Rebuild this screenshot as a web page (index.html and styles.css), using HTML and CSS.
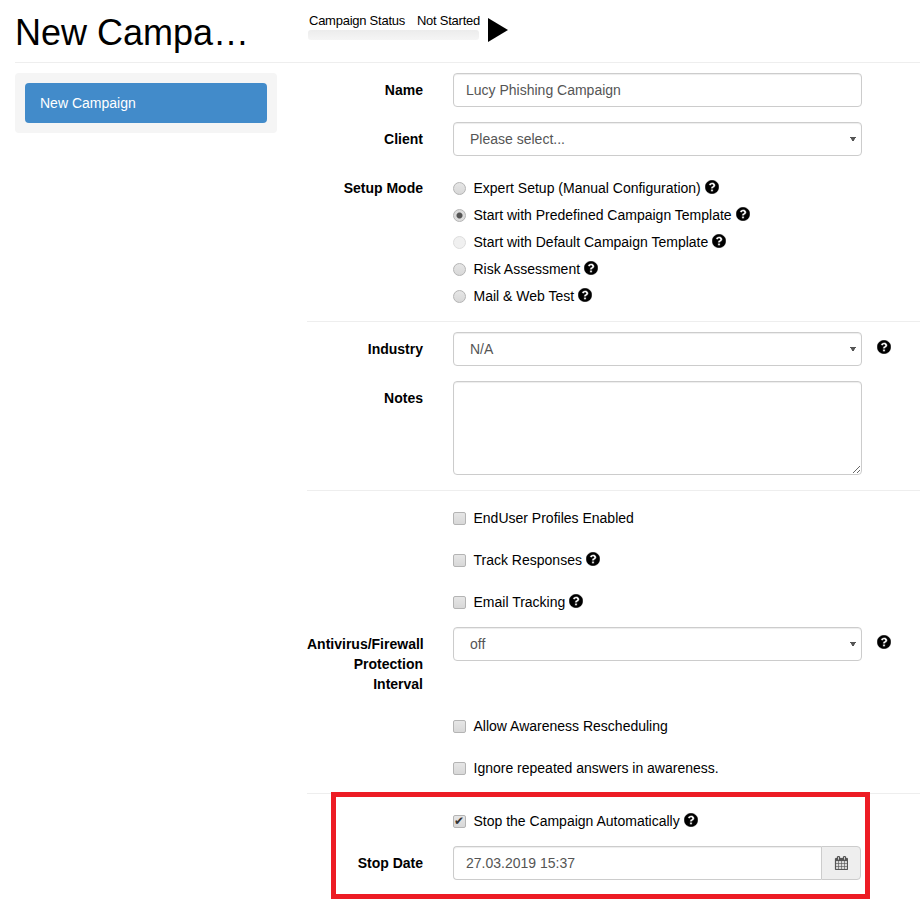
FILE: index.html
```html
<!DOCTYPE html>
<html lang="en">
<head>
    <meta charset="UTF-8">
    <title>New Campaign</title>
    <link rel="stylesheet" href="styles.css">
</head>
<body>
    <svg class="icon-defs" width="0" height="0">
        <symbol id="help" viewBox="100 100 1592 1592">
            <path d="M1024 1376v-192q0-14-9-23t-23-9h-192q-14 0-23 9t-9 23v192q0 14 9 23t23 9h192q14 0 23-9t9-23zm256-672q0-88-55.5-163t-138.5-116-170-41q-243 0-371 213-15 24 8 42l132 100q7 6 19 6 16 0 25-12 53-68 86-92 34-24 86-24 48 0 85.5 26t37.5 59q0 38-20 61t-68 45q-63 28-115.5 86.5t-52.5 125.5v36q0 14 9 23t23 9h192q14 0 23-9t9-23q0-19 21.5-49.5t54.5-49.5q32-18 49-28.5t46-35 44.5-48 28-60.5 12.5-81zm384 192q0 209-103 385.5t-279.5 279.5-385.5 103-385.5-103-279.5-279.5-103-385.5 103-385.5 279.5-279.5 385.5-103 385.5 103 279.5 279.5 103 385.5z"/>
        </symbol>
    </svg>

    <div class="page-header">
        <h1 class="title">New Campa…</h1>
        <div class="status">
            <div class="status-text">
                <span>Campaign Status</span>
                <span>Not Started</span>
            </div>
            <div class="progress"></div>
        </div>
        <div class="play"></div>
    </div>

    <div class="content">
        <div class="sidebar">
            <a class="nav-item" href="#">New Campaign</a>
        </div>

        <form class="campaign-form">
            <div class="section">
                <div class="form-row">
                    <label>Name</label>
                    <input class="control" type="text" value="Lucy Phishing Campaign">
                </div>
                <div class="form-row">
                    <label>Client</label>
                    <select class="control"><option>Please select...</option></select>
                </div>
                <div class="form-row last">
                    <label>Setup Mode</label>
                    <div class="radios">
                        <div class="radio"><input type="radio" name="mode"><span>Expert Setup (Manual Configuration)</span><svg class="help"><use href="#help"/></svg></div>
                        <div class="radio"><input type="radio" name="mode" checked><span>Start with Predefined Campaign Template</span><svg class="help"><use href="#help"/></svg></div>
                        <div class="radio"><input type="radio" name="mode" disabled><span>Start with Default Campaign Template</span><svg class="help"><use href="#help"/></svg></div>
                        <div class="radio"><input type="radio" name="mode"><span>Risk Assessment</span><svg class="help"><use href="#help"/></svg></div>
                        <div class="radio"><input type="radio" name="mode"><span>Mail &amp; Web Test</span><svg class="help"><use href="#help"/></svg></div>
                    </div>
                </div>
            </div>

            <div class="section">
                <div class="form-row">
                    <label>Industry</label>
                    <select class="control"><option>N/A</option></select>
                    <svg class="help side"><use href="#help"/></svg>
                </div>
                <div class="form-row">
                    <label>Notes</label>
                    <textarea class="control notes"></textarea>
                </div>
            </div>

            <div class="section">
                <div class="check"><input type="checkbox"><span>EndUser Profiles Enabled</span></div>
                <div class="check"><input type="checkbox"><span>Track Responses</span><svg class="help"><use href="#help"/></svg></div>
                <div class="check"><input type="checkbox"><span>Email Tracking</span><svg class="help"><use href="#help"/></svg></div>
                <div class="form-row">
                    <label>Antivirus/Firewall Protection Interval</label>
                    <select class="control"><option>off</option></select>
                    <svg class="help side"><use href="#help"/></svg>
                </div>
                <div class="check"><input type="checkbox"><span>Allow Awareness Rescheduling</span></div>
                <div class="check"><input type="checkbox"><span>Ignore repeated answers in awareness.</span></div>
            </div>

            <div class="section no-border">
                <div class="check"><input type="checkbox" checked><span>Stop the Campaign Automatically</span><svg class="help"><use href="#help"/></svg></div>
                <div class="form-row">
                    <label>Stop Date</label>
                    <div class="input-group">
                        <input class="control" type="text" value="27.03.2019 15:37">
                        <div class="addon">
                            <svg class="calendar" viewBox="0 0 1664 1792"><path d="M192 1664h288v-288h-288v288zm352 0h320v-288h-320v288zm-352-352h288v-320h-288v320zm352 0h320v-320h-320v320zm-352-384h288v-288h-288v288zm736 736h320v-288h-320v288zm-384-736h320v-288h-320v288zm768 736h288v-288h-288v288zm-384-352h320v-320h-320v320zm-352-864v-288q0-13-9.5-22.5t-22.5-9.5h-64q-13 0-22.5 9.5t-9.5 22.5v288q0 13 9.5 22.5t22.5 9.5h64q13 0 22.5-9.5t9.5-22.5zm736 864h288v-320h-288v320zm-384-384h320v-288h-320v288zm384 0h288v-288h-288v288zm32-480v-288q0-13-9.5-22.5t-22.5-9.5h-64q-13 0-22.5 9.5t-9.5 22.5v288q0 13 9.5 22.5t22.5 9.5h64q13 0 22.5-9.5t9.5-22.5zm384-64v1280q0 52-38 90t-90 38h-1408q-52 0-90-38t-38-90v-1280q0-52 38-90t90-38h128v-96q0-66 47-113t113-47h64q66 0 113 47t47 113v96h384v-96q0-66 47-113t113-47h64q66 0 113 47t47 113v96h128q52 0 90 38t38 90z"/></svg>
                        </div>
                    </div>
                </div>
            </div>

            <div class="highlight"></div>
        </form>
    </div>
</body>
</html>
```

FILE: styles.css
```css
* {
    box-sizing: border-box;
}

body {
    margin: 0;
    font-family: "Liberation Sans", Arial, sans-serif;
    font-size: 14px;
    line-height: 20px;
    color: #000;
    background: #fff;
}

.icon-defs {
    position: absolute;
}

.page-header {
    display: flex;
    height: 63px;
    margin-left: 15px;
    border-bottom: 1px solid #eee;
}

.title {
    width: 240px;
    margin: 13px 52px 0 0;
    font-size: 36px;
    font-weight: 400;
    line-height: 40px;
    white-space: nowrap;
}

.status {
    width: 171px;
    margin-top: 11px;
    margin-left: 1px;
}

.status-text {
    display: flex;
    justify-content: space-between;
    margin-right: -1px;
    padding-left: 1px;
    font-size: 13px;
    line-height: 19px;
    letter-spacing: -0.25px;
}

.progress {
    height: 10px;
    background: linear-gradient(#ececec, #f5f5f5);
    border-radius: 3px;
}

.play {
    width: 0;
    height: 0;
    margin: 18px 0 0 9px;
    border-left: 20px solid #000;
    border-top: 12.5px solid transparent;
    border-bottom: 12.5px solid transparent;
}

.content {
    display: flex;
    align-items: flex-start;
    margin-top: 10px;
    padding-left: 15px;
}

.sidebar {
    flex: none;
    width: 262px;
    margin-right: 30px;
    padding: 10px;
    background: #f5f5f5;
    border-radius: 4px;
}

.nav-item {
    display: block;
    height: 40px;
    padding: 10px 15px;
    color: #fff;
    text-decoration: none;
    background: #428bca;
    border-radius: 4px;
}

.campaign-form {
    position: relative;
    flex: 1;
    min-width: 0;
    padding-bottom: 10px;
}

.section {
    padding-top: 10px;
    border-bottom: 1px solid #eee;
}

.section:first-child {
    padding-top: 0;
}

.no-border {
    border-bottom: 0;
}

.form-row {
    display: flex;
    align-items: flex-start;
    margin-bottom: 15px;
}

.form-row.last {
    margin-bottom: 11px;
}

.form-row label {
    flex: none;
    width: 116px;
    margin-right: 30px;
    padding-top: 7px;
    font-weight: 700;
    text-align: right;
}

.control {
    display: block;
    width: 409px;
    height: 34px;
    padding: 6px 12px;
    font-family: inherit;
    font-size: 14px;
    line-height: 20px;
    color: #555;
    background-color: #fff;
    border: 1px solid #ccc;
    border-radius: 4px;
    box-shadow: inset 0 1px 1px rgba(0, 0, 0, 0.075);
}

select.control {
    appearance: none;
    padding-left: 16px;
    background-image:
        linear-gradient(to top right, transparent 48%, #555 52%),
        linear-gradient(to top left, transparent 48%, #555 52%);
    background-repeat: no-repeat;
    background-size: 3px 5px;
    background-position: right 8px center, right 5px center;
}

.notes {
    height: 94px;
}

.radios {
    padding-top: 4px;
}

.radio,
.check {
    display: flex;
    align-items: center;
}

.radio {
    height: 27px;
}

.radio span {
    padding-bottom: 1px;
}

.check {
    height: 34px;
    margin-bottom: 8px;
    margin-left: 146px;
}

.radio input,
.check input {
    appearance: none;
    flex: none;
    width: 13px;
    height: 13px;
    margin: 0 7.5px 0 0;
    background: linear-gradient(#e6e6e6, #d8d8d8);
    border: 1px solid #b4b4b4;
}

.radio input {
    border-radius: 50%;
}

.radio input:checked {
    background: radial-gradient(circle, #555 0, #555 2.5px, #dcdcdc 3.5px);
}

.radio input:disabled {
    background: #f0f0f0;
    border-color: #ddd;
}

.check input {
    position: relative;
    border-radius: 2px;
}

.check input:checked::before {
    content: "\2714";
    position: absolute;
    top: -1px;
    left: 0;
    font-size: 12px;
    line-height: 13px;
    color: #333;
}

.help {
    flex: none;
    width: 14px;
    height: 14px;
    margin: -3px 0 0 4px;
    stroke: #000;
    stroke-width: 50px;
}

.help.side {
    margin: 8px 0 0 15px;
}

.input-group {
    display: flex;
    width: 408px;
}

.input-group .control {
    flex: 1;
    width: auto;
    border-right: 0;
    border-radius: 4px 0 0 4px;
}

.addon {
    display: flex;
    align-items: center;
    justify-content: center;
    width: 40px;
    height: 34px;
    background: #eee;
    border: 1px solid #ccc;
    border-radius: 0 4px 4px 0;
}

.calendar {
    width: 14px;
    height: 14px;
    fill: #555;
    stroke: #555;
    stroke-width: 30px;
}

.highlight {
    position: absolute;
    top: 719px;
    left: 24px;
    width: 539px;
    height: 107px;
    border: 5px solid #ed1c24;
}
```
